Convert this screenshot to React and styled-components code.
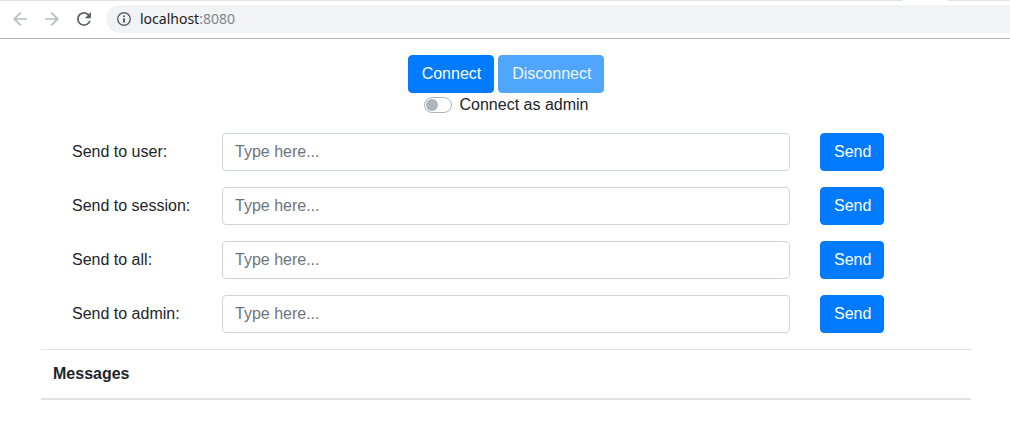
import React from "react";
import styled, { createGlobalStyle } from "styled-components";

const GlobalStyle = createGlobalStyle`
  *, *::before, *::after { box-sizing: border-box; }
  body {
    margin: 0;
    background: #fff;
    color: #212529;
    font: 400 16px/24px "Liberation Sans", Arial, sans-serif;
  }
  button, input { font: inherit; margin: 0; }
`;

const TabEdge = styled.div`
  display: flex;
  justify-content: space-between;
  height: 1px;
`;

const Edge = styled.span`
  background: #dee1e6;
  flex: ${(p) => (p.$grow ? "1" : "0 0 62px")};
  margin-right: ${(p) => (p.$grow ? "46px" : "0")};
`;

const Toolbar = styled.nav`
  display: flex;
  align-items: center;
  gap: 12px;
  height: 38px;
  padding: 4px 0 5px 10px;
  border-bottom: 1px solid #b4b4b4;
`;

const NavButton = styled.button`
  display: flex;
  padding: 0;
  border: 0;
  background: none;
  color: ${(p) => (p.disabled ? "#babcbe" : "#5f6368")};
`;

const AddressBar = styled.div`
  display: flex;
  align-items: center;
  gap: 8px;
  flex: 1;
  height: 28px;
  padding-left: 10px;
  border-radius: 14px 0 0 14px;
  background: #f1f3f4;
  color: #5f6368;
`;

const Address = styled.span`
  font: 14px/20px "Noto Sans", "Open Sans", sans-serif;
  color: #202124;
`;

const Port = styled.span`
  color: #80868b;
`;

const Page = styled.main`
  max-width: 1010px;
  margin: 0 auto;
  padding: 16px 39px 24px 41px;
`;

const Connection = styled.section`
  display: flex;
  flex-direction: column;
  align-items: center;
  margin-bottom: 16px;
`;

const ButtonPair = styled.div`
  display: flex;
  gap: 4px;
`;

const Button = styled.button`
  height: 38px;
  padding: 6px 12px 6px 13px;
  border: 1px solid #007bff;
  border-radius: 4px;
  background: #007bff;
  color: #fff;

  &:disabled {
    border-color: #4fa6fc;
    background: #4fa6fc;
    color: #edf6ff;
  }
`;

const SwitchLabel = styled.label`
  display: flex;
  align-items: center;
  gap: 8px;
`;

const Switch = styled.input`
  appearance: none;
  width: 28px;
  height: 16px;
  padding: 1px;
  border: 1px solid #adb5bd;
  border-radius: 8px;
  background: #fff;

  &::before {
    content: "";
    display: block;
    width: 12px;
    height: 12px;
    border-radius: 50%;
    background: #adb5bd;
  }
  &:checked {
    border-color: #007bff;
    background: #007bff;
  }
  &:checked::before {
    margin-left: 12px;
    background: #fff;
  }
`;

const SendRow = styled.form`
  display: grid;
  grid-template-columns: 120px 1fr 151px;
  column-gap: 30px;
  align-items: center;
  justify-items: start;
  margin-bottom: 16px;
  padding-left: 31px;
`;

const TextInput = styled.input`
  width: 100%;
  height: 38px;
  padding: 6px 12px;
  border: 1px solid #ced4da;
  border-radius: 4px;
  background: #fff;
  color: #495057;

  &::placeholder { color: #6c757d; opacity: 1; }
`;

const MessageTable = styled.table`
  width: 100%;
  border-spacing: 0;
`;

const HeadCell = styled.th`
  padding: 12px;
  border-top: 1px solid #dee2e6;
  border-bottom: 2px solid #dee2e6;
  text-align: left;
`;

const NavIcon = ({ d }) => (
  <svg width="20" height="20" viewBox="0.5 0.5 23 23" fill="currentColor">
    <path d={d} />
  </svg>
);

const BACK = "M20 11H7.830l5.590-5.590L12 4l-8 8 8 8 1.410-1.410L7.830 13H20z";
const FORWARD = "M12 4l-1.410 1.410L16.170 11H4v2h12.170l-5.580 5.590L12 20l8-8z";
const RELOAD =
  "M17.650 6.350A7.958 7.958 0 0 0 12 4a8 8 0 1 0 7.730 10h-2.080A5.990 5.990 0 0 1 12 18a6 6 0 1 1 0-12c1.660 0 3.140.690 4.220 1.780L13 11h7V4z";

const InfoIcon = () => (
  <svg width="16" height="16" viewBox="0 0 16 16">
    <circle cx="8" cy="8" r="6.3" fill="none" stroke="currentColor" strokeWidth="1.4" />
    <path d="M7 4.500h2v1.600H7zM7 7.200h2v4.300H7z" fill="currentColor" />
  </svg>
);

const recipients = ["user", "session", "all", "admin"];

export default function App() {
  return (
    <>
      <GlobalStyle />
      <header>
        <TabEdge>
          <Edge $grow />
          <Edge />
        </TabEdge>
        <Toolbar>
          <NavButton aria-label="Back" disabled><NavIcon d={BACK} /></NavButton>
          <NavButton aria-label="Forward" disabled><NavIcon d={FORWARD} /></NavButton>
          <NavButton aria-label="Reload"><NavIcon d={RELOAD} /></NavButton>
          <AddressBar>
            <InfoIcon />
            <Address>localhost<Port>:8080</Port></Address>
          </AddressBar>
        </Toolbar>
      </header>
      <Page>
        <Connection>
          <ButtonPair>
            <Button type="button">Connect</Button>
            <Button type="button" disabled>Disconnect</Button>
          </ButtonPair>
          <SwitchLabel>
            <Switch type="checkbox" role="switch" />
            Connect as admin
          </SwitchLabel>
        </Connection>
        {recipients.map((name) => (
          <SendRow key={name} onSubmit={(e) => e.preventDefault()}>
            <label htmlFor={`send-${name}`}>Send to {name}:</label>
            <TextInput id={`send-${name}`} type="text" placeholder="Type here..." />
            <Button type="submit">Send</Button>
          </SendRow>
        ))}
        <MessageTable>
          <thead>
            <tr>
              <HeadCell scope="col">Messages</HeadCell>
            </tr>
          </thead>
        </MessageTable>
      </Page>
    </>
  );
}
